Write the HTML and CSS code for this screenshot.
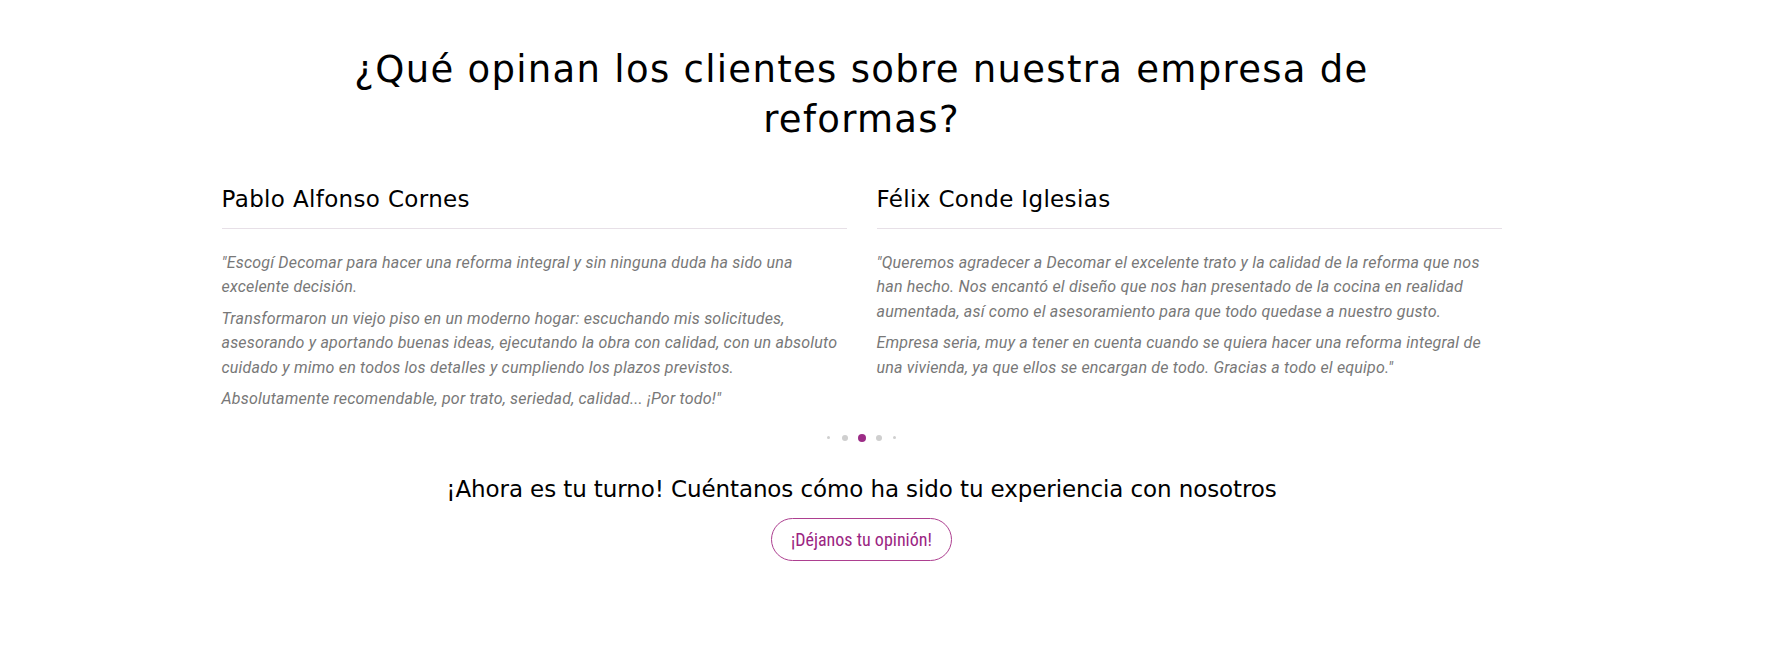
FILE: index.html
```html
<!DOCTYPE html>
<html lang="es">
<head>
<meta charset="utf-8">
<title>Opiniones</title>
<link rel="stylesheet" href="styles.css">
</head>
<body>
<section class="testimonials">
  <div class="container">
    <h2 class="title">¿Qué opinan los clientes sobre nuestra empresa de reformas?</h2>
    <div class="reviews">
      <article class="review">
        <h3 class="review-name">Pablo Alfonso Cornes</h3>
        <div class="review-body">
          <p>"Escogí Decomar para hacer una reforma integral y sin ninguna duda ha sido una excelente decisión.</p>
          <p>Transformaron un viejo piso en un moderno hogar: escuchando mis solicitudes, asesorando y aportando buenas ideas, ejecutando la obra con calidad, con un absoluto cuidado y mimo en todos los detalles y cumpliendo los plazos previstos.</p>
          <p>Absolutamente recomendable, por trato, seriedad, calidad... ¡Por todo!"</p>
        </div>
      </article>
      <article class="review">
        <h3 class="review-name">Félix Conde Iglesias</h3>
        <div class="review-body">
          <p>"Queremos agradecer a Decomar el excelente trato y la calidad de la reforma que nos han hecho. Nos encantó el diseño que nos han presentado de la cocina en realidad aumentada, así como el asesoramiento para que todo quedase a nuestro gusto.</p>
          <p>Empresa seria, muy a tener en cuenta cuando se quiera hacer una reforma integral de una vivienda, ya que ellos se encargan de todo. Gracias a todo el equipo."</p>
        </div>
      </article>
    </div>
    <div class="dots">
      <span class="dot dot-xs"></span>
      <span class="dot dot-sm"></span>
      <span class="dot dot-active"></span>
      <span class="dot dot-sm"></span>
      <span class="dot dot-xs"></span>
    </div>
    <p class="cta-text">¡Ahora es tu turno! Cuéntanos cómo ha sido tu experiencia con nosotros</p>
    <div class="cta">
      <a class="cta-button" href="#">¡Déjanos tu opinión!</a>
    </div>
  </div>
</section>
</body>
</html>
```

FILE: styles.css
```css
html, body {
  margin: 0;
  padding: 0;
  background: #ffffff;
}

body {
  font-family: "DejaVu Sans", "Liberation Sans", sans-serif;
  color: #000;
}

.testimonials {
  padding-top: 45px;
}

.container {
  width: 1280px;
  margin-left: calc(50% - 661px);
}

.title {
  max-width: 1120px;
  margin: 0 auto;
  font-family: "DejaVu Sans", sans-serif;
  font-weight: 400;
  font-size: 37px;
  line-height: 50px;
  text-align: center;
  color: #000;
  letter-spacing: 1.3px;
}

.reviews {
  display: grid;
  grid-template-columns: 1fr 1fr;
  column-gap: 30px;
  margin-top: 40px;
}

.review-name {
  margin: 0;
  padding-bottom: 15px;
  border-bottom: 1px solid #e7e0e7;
  font-family: "DejaVu Sans", sans-serif;
  font-weight: 400;
  font-size: 23px;
  line-height: 28px;
  letter-spacing: 0.35px;
  color: #000;
}

.review-body {
  padding-top: 21.5px;
}

.review-body p {
  margin: 0 0 7px;
  font-family: Roboto, "Liberation Sans", sans-serif;
  font-style: italic;
  font-size: 16px;
  line-height: 24.5px;
  letter-spacing: 0.2px;
  color: #787878;
}

.dots {
  display: flex;
  justify-content: center;
  align-items: center;
  height: 8px;
  margin-top: 15px;
}

.dot {
  display: block;
  border-radius: 50%;
  background: #cfcfcf;
  margin: 0 5px;
}

.dot-xs {
  width: 3px;
  height: 3px;
  margin: 0 6.5px;
}

.dot-sm {
  width: 6px;
  height: 6px;
}

.dot-active {
  width: 8px;
  height: 8px;
  background: #9c2c86;
}

.cta-text {
  margin: 33px 0 0;
  text-align: center;
  font-family: "DejaVu Sans", sans-serif;
  font-size: 23px;
  line-height: 28px;
  letter-spacing: -0.1px;
  color: #000;
}

.cta {
  display: flex;
  justify-content: center;
  margin-top: 15px;
}

.cta-button {
  display: inline-block;
  padding: 10px 19px;
  border: 1px solid #ad3f90;
  border-radius: 24px;
  font-family: Roboto, "Liberation Sans", sans-serif;
  font-size: 18px;
  font-stretch: 87%;
  line-height: 21px;
  color: #9b2582;
  text-decoration: none;
}
```
